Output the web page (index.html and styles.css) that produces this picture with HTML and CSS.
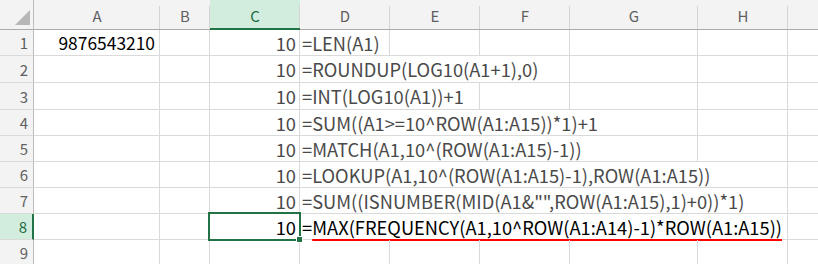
FILE: index.html
```html
<!DOCTYPE html>
<html>
<head>
<meta charset="utf-8">
<link rel="stylesheet" href="styles.css">
</head>
<body>
<div class="sheet">
  <div class="corner"><span class="tri"></span></div>
  <div class="ch">A</div>
  <div class="ch">B</div>
  <div class="ch sel">C</div>
  <div class="ch">D</div>
  <div class="ch">E</div>
  <div class="ch">F</div>
  <div class="ch">G</div>
  <div class="ch">H</div>
  <div class="ch last"></div>

  <div class="rh">1</div>
  <div class="c num big a1">9876543210</div>
  <div class="c"></div>
  <div class="c num">10</div>
  <div class="c f">=LEN(A1)</div>
  <div class="c"></div><div class="c"></div><div class="c"></div><div class="c"></div><div class="c last"></div>

  <div class="rh">2</div>
  <div class="c"></div><div class="c"></div>
  <div class="c num">10</div>
  <div class="c f s3">=ROUNDUP(LOG10(A1+1),0)</div>
  <div class="c"></div><div class="c"></div><div class="c last"></div>

  <div class="rh">3</div>
  <div class="c"></div><div class="c"></div>
  <div class="c num">10</div>
  <div class="c f s2">=INT(LOG10(A1))+1</div>
  <div class="c"></div><div class="c"></div><div class="c"></div><div class="c last"></div>

  <div class="rh">4</div>
  <div class="c"></div><div class="c"></div>
  <div class="c num">10</div>
  <div class="c f s4">=SUM((A1&gt;=10^ROW(A1:A15))*1)+1</div>
  <div class="c"></div><div class="c last"></div>

  <div class="rh">5</div>
  <div class="c"></div><div class="c"></div>
  <div class="c num">10</div>
  <div class="c f s4">=MATCH(A1,10^(ROW(A1:A15)-1))</div>
  <div class="c"></div><div class="c last"></div>

  <div class="rh">6</div>
  <div class="c"></div><div class="c"></div>
  <div class="c num">10</div>
  <div class="c f s5">=LOOKUP(A1,10^(ROW(A1:A15)-1),ROW(A1:A15))</div>
  <div class="c last"></div>

  <div class="rh">7</div>
  <div class="c"></div><div class="c"></div>
  <div class="c num">10</div>
  <div class="c f s5">=SUM((ISNUMBER(MID(A1&amp;"",ROW(A1:A15),1)+0))*1)</div>
  <div class="c last"></div>

  <div class="rh sel">8</div>
  <div class="c"></div><div class="c"></div>
  <div class="c num big active">10<span class="handle"></span></div>
  <div class="c f s5 big">=<span class="mark">MAX(FREQUENCY(A1,10^ROW(A1:A14)-1)*ROW(A1:A15))</span></div>
  <div class="c last"></div>

  <div class="rh">9</div>
  <div class="c"></div><div class="c"></div><div class="c"></div><div class="c"></div><div class="c"></div><div class="c"></div><div class="c"></div><div class="c"></div><div class="c last"></div>
</div>
</body>
</html>
```
FILE: styles.css
```css
html, body {
  margin: 0;
  padding: 0;
  background: #ffffff;
  overflow: hidden;
}
.sheet {
  display: grid;
  grid-template-columns: 34px 126px 50px 90px 90px 90px 90px 128px 90px 40px;
  grid-template-rows: 30px 26px 27px 27px 26px 26px 26px 26px 26px 26px;
  width: 818px;
  font-family: "Noto Sans CJK JP", "Noto Sans", sans-serif;
}
.corner {
  position: relative;
  background: #f3f3f3;
  border-right: 1px solid #bdbdbd;
  border-bottom: 1px solid #ababab;
}
.tri {
  position: absolute;
  left: 15px;
  top: 10px;
  width: 0;
  height: 0;
  border-left: 15px solid transparent;
  border-bottom: 15px solid #b7b7b7;
}
.ch {
  background-color: #f3f3f3;
  background-image: linear-gradient(#d5d5d5, #d5d5d5);
  background-repeat: no-repeat;
  background-size: 1px 23px;
  background-position: right bottom;
  border-bottom: 1px solid #ababab;
  display: flex;
  align-items: flex-end;
  justify-content: center;
  padding-bottom: 4px;
  font-size: 15px;
  line-height: 18px;
  color: #5f5f5f;
}
.ch.sel {
  background-color: #d2ecdd;
  color: #1d6b40;
  border-bottom: 2px solid #217346;
  padding-bottom: 3px;
}
.ch.last {
  background-image: none;
}
.rh {
  background: #f3f3f3;
  border-right: 1px solid #bdbdbd;
  border-bottom: 1px solid #dadada;
  display: flex;
  align-items: center;
  justify-content: flex-end;
  padding-right: 5px;
  font-size: 15px;
  color: #5f5f5f;
}
.rh.sel {
  background: #d2ecdd;
  color: #1d6b40;
  border-right: 2px solid #217346;
}
.c {
  border-right: 1px solid #dadada;
  border-bottom: 1px solid #dadada;
  display: flex;
  align-items: center;
  font-size: 18.3px;
  color: #4a4a4a;
  white-space: nowrap;
  min-width: 0;
}
.c.last {
  border-right: none;
}
.num {
  justify-content: flex-end;
  padding-right: 3px;
}
.f {
  padding-left: 2px;
}
.big {
  font-size: 18.3px;
  color: #000;
}
.a1 {
  font-size: 17.4px;
  padding-right: 4px;
}
.s2 { grid-column: span 2; }
.s3 { grid-column: span 3; }
.s4 { grid-column: span 4; }
.s5 { grid-column: span 5; }
.active {
  position: relative;
}
.active::before {
  content: "";
  position: absolute;
  left: -2px;
  top: -2px;
  width: 89px;
  height: 25px;
  border: 2px solid #217346;
}
.handle {
  position: absolute;
  right: -4px;
  bottom: -4px;
  width: 5px;
  height: 5px;
  background: #217346;
  border: 1px solid #fff;
}
.mark {
  text-decoration: underline;
  text-decoration-color: #ff0000;
  text-decoration-thickness: 2px;
  text-underline-offset: 4px;
  padding-right: 9px;
}
```
